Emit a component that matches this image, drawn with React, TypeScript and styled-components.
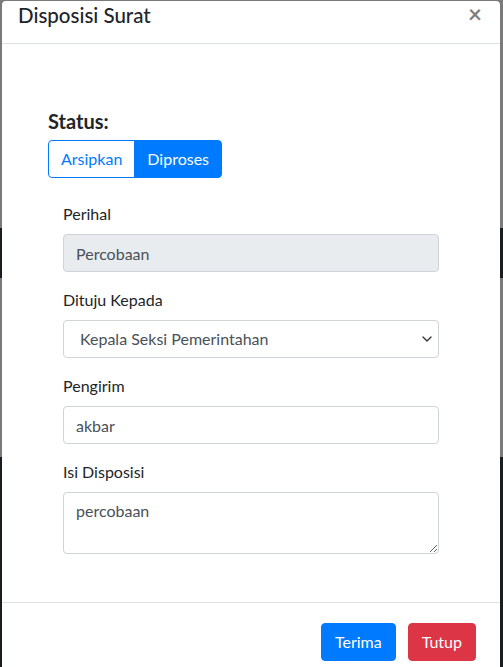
import React, { useState } from 'react';
import styled, { createGlobalStyle } from 'styled-components';
import { ChevronDown } from 'lucide-react';

const GlobalStyle = createGlobalStyle`
  html, body {
    margin: 0;
    padding: 0;
    height: 100%;
    overflow: hidden;
    background: #7a7a7a;
    font-family: Lato, "Noto Sans", sans-serif;
  }
  * {
    box-sizing: border-box;
  }
`;

const Page = styled.div`
  position: relative;
  height: 100vh;
  overflow: hidden;
  display: flex;
  flex-direction: column;
`;

const Band = styled.div<{ dark?: boolean; h?: number }>`
  flex: ${(p) => (p.h ? `0 0 ${p.h}px` : '1 1 auto')};
  background: ${(p) => (p.dark ? '#1a1d20' : '#7a7a7a')};
`;

const Modal = styled.div`
  position: absolute;
  top: 1px;
  left: 2px;
  width: 498px;
  background: #fff;
  border-radius: 4px 4px 0 0;
  display: flex;
  flex-direction: column;
  color: #212529;
`;

const Header = styled.div`
  display: flex;
  align-items: flex-start;
  justify-content: space-between;
  padding: 0 18px 14px 16px;
  border-bottom: 1px solid #dee2e6;

  .title {
    margin: 0;
    font-size: 20.5px;
    line-height: 28px;
    font-weight: 500;
  }

  .close {
    border: none;
    background: none;
    padding: 0;
    margin-top: 1px;
    font-family: Lato, sans-serif;
    font-size: 24px;
    font-weight: 700;
    line-height: 24px;
    color: #000;
    opacity: 0.5;
    cursor: pointer;
  }
`;

const Body = styled.div`
  padding: 65px 46px 48px;
`;

const StatusLabel = styled.div`
  font-size: 20px;
  line-height: 24px;
  font-weight: 700;
  margin-bottom: 7px;
`;

const BtnGroup = styled.div`
  display: inline-flex;
  margin-bottom: 24px;
`;

const ToggleBtn = styled.button<{ active: boolean }>`
  font-family: inherit;
  font-size: 16px;
  line-height: 24px;
  padding: 6px 12px;
  border: 1px solid #007bff;
  background: ${(p) => (p.active ? '#007bff' : '#fff')};
  color: ${(p) => (p.active ? '#fff' : '#007bff')};
  cursor: pointer;

  &:first-child {
    border-radius: 4px 0 0 4px;
  }
  &:last-child {
    border-radius: 0 4px 4px 0;
    margin-left: -1px;
  }
`;

const Form = styled.div`
  padding: 0 15px;
  display: flex;
  flex-direction: column;
  gap: 16px;
`;

const Group = styled.div`
  display: flex;
  flex-direction: column;
`;

const Label = styled.label`
  font-size: 16px;
  line-height: 24px;
  margin-bottom: 8px;
`;

const fieldCss = `
  width: 100%;
  font-family: Lato, "Noto Sans", sans-serif;
  font-size: 16px;
  line-height: 24px;
  color: #495057;
  border: 1px solid #ced4da;
  border-radius: 4px;
  padding: 6px 12px;
  background: #fff;
  outline: none;
`;

const Input = styled.input`
  ${fieldCss}
  height: 38px;

  &:disabled {
    background: #e9ecef;
    opacity: 1;
  }
`;

const SelectWrap = styled.div`
  position: relative;

  svg {
    position: absolute;
    right: 4px;
    top: 11px;
    color: #333;
    pointer-events: none;
  }
`;

const Select = styled.select`
  ${fieldCss}
  height: 38px;
  padding-left: 16px;
  appearance: none;
`;

const TextArea = styled.textarea`
  ${fieldCss}
  height: 62px;
  resize: vertical;
  display: block;
`;

const Footer = styled.div`
  display: flex;
  justify-content: flex-end;
  gap: 12px;
  padding: 20px 24px 20px;
  border-top: 1px solid #dee2e6;
`;

const ActionBtn = styled.button<{ variant: 'primary' | 'danger' }>`
  font-family: inherit;
  font-size: 16px;
  line-height: 24px;
  padding: 6px 13px;
  border-radius: 4px;
  border: 1px solid ${(p) => (p.variant === 'primary' ? '#007bff' : '#dc3545')};
  background: ${(p) => (p.variant === 'primary' ? '#007bff' : '#dc3545')};
  color: #fff;
  cursor: pointer;
`;

const App = () => {
  const [status, setStatus] = useState<'arsip' | 'proses'>('proses');
  const [tujuan, setTujuan] = useState('pemerintahan');
  const [pengirim, setPengirim] = useState('akbar');
  const [isi, setIsi] = useState('percobaan');

  return (
    <Page>
      <GlobalStyle />
      <Band h={228} />
      <Band dark h={50} />
      <Band h={179} />
      <Band dark />

      <Modal>
        <Header>
          <h5 className="title">Disposisi Surat</h5>
          <button className="close" type="button">
            ×
          </button>
        </Header>
        <Body>
          <StatusLabel>Status:</StatusLabel>
          <BtnGroup>
            <ToggleBtn active={status === 'arsip'} onClick={() => setStatus('arsip')}>
              Arsipkan
            </ToggleBtn>
            <ToggleBtn active={status === 'proses'} onClick={() => setStatus('proses')}>
              Diproses
            </ToggleBtn>
          </BtnGroup>
          <Form>
            <Group>
              <Label>Perihal</Label>
              <Input value="Percobaan" disabled readOnly />
            </Group>
            <Group>
              <Label>Dituju Kepada</Label>
              <SelectWrap>
                <Select value={tujuan} onChange={(e) => setTujuan(e.target.value)}>
                  <option value="pemerintahan">Kepala Seksi Pemerintahan</option>
                  <option value="umum">Kepala Seksi Umum</option>
                </Select>
                <ChevronDown size={16} strokeWidth={2} />
              </SelectWrap>
            </Group>
            <Group>
              <Label>Pengirim</Label>
              <Input value={pengirim} onChange={(e) => setPengirim(e.target.value)} />
            </Group>
            <Group>
              <Label>Isi Disposisi</Label>
              <TextArea value={isi} onChange={(e) => setIsi(e.target.value)} />
            </Group>
          </Form>
        </Body>
        <Footer>
          <ActionBtn variant="primary">Terima</ActionBtn>
          <ActionBtn variant="danger">Tutup</ActionBtn>
        </Footer>
      </Modal>
    </Page>
  );
};

export default App;
